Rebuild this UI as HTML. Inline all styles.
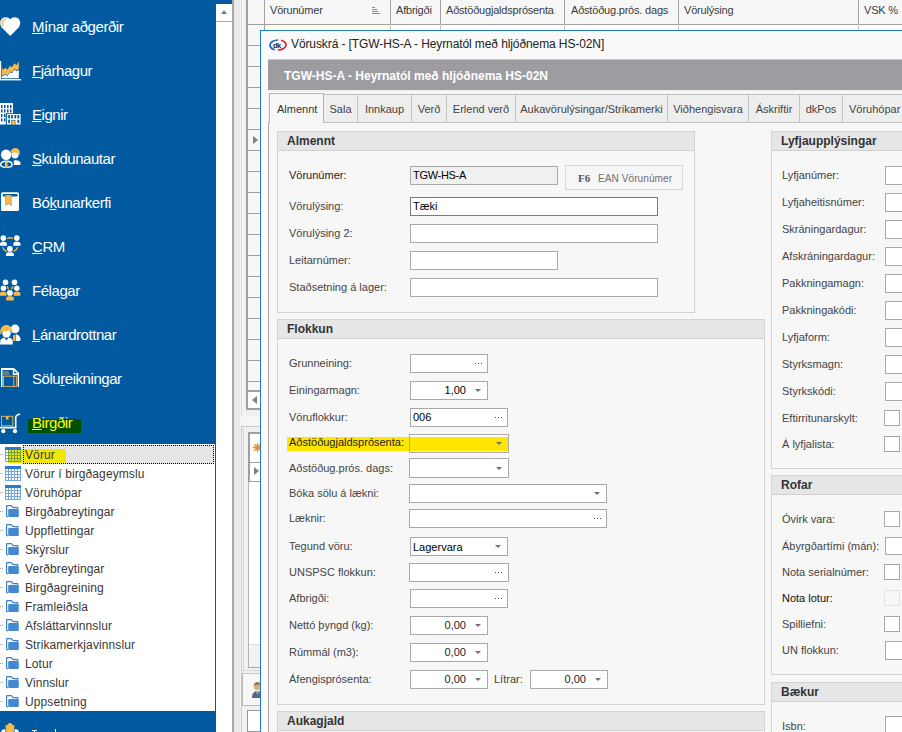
<!DOCTYPE html>
<html><head><meta charset="utf-8"><style>
html,body{margin:0;padding:0;}
body{width:902px;height:732px;overflow:hidden;position:relative;background:#f0f0f0;font-family:"Liberation Sans",sans-serif;}
body>div{position:absolute;}
.t{white-space:pre;line-height:1;}
.nav u{text-decoration:underline;text-underline-offset:1px;text-decoration-thickness:1px;}
svg{display:block;}
</style></head><body>
<div style="left:0px;top:0px;width:232px;height:732px;background:#015aa0"></div>
<div style="left:0;top:16px"><svg width="21" height="21" viewBox="0 0 21 21"><path d="M10.2 20 L2 11.8 C-0.6 9.1 -0.4 4.1 2.7 2.1 C5.3 0.5 8.5 1.1 10.2 3.3 C11.9 1.1 15.1 0.5 17.7 2.1 C20.8 4.1 21 9.1 18.4 11.8 Z" fill="#fff"/><path d="M6.1 3 C3.6 3.4 2.1 5.5 2.4 8.2 L3 10.4" stroke="#fbb948" stroke-width="1.5" fill="none"/></svg></div>
<div class="t nav" style="left:32px;top:19px;font-size:15px;color:#fff;letter-spacing:-0.45px"><u>M</u>ínar aðgerðir</div>
<div style="left:0;top:58px"><svg width="22" height="24" viewBox="0 0 22 24"><rect x="0" y="3" width="1.2" height="19" fill="#fff"/><rect x="0" y="21" width="21" height="1.4" fill="#fff"/><path d="M2 9.8 L3.3 11.8 L5.2 9.8 L7.5 11.8 L9.8 7.9 L12.1 9.2 L14.4 5.2 L16.4 7.2 L18.8 3.6 L18.8 11.1 L16.4 12.1 L14.4 10.8 L12.1 14.4 L9.8 13.4 L7.5 17.4 L5.2 15.4 L3.3 17.4 L2 16.7 Z" fill="#fbb948"/><path d="M2 17.4 L3.3 18.2 L5.2 16.2 L7.5 18.2 L9.8 14.2 L12.1 15.2 L14.4 11.6 L16.4 12.9 L18.8 11.9 L18.8 20.2 L2 20.2 Z" fill="#fff"/></svg></div>
<div class="t nav" style="left:32px;top:63px;font-size:15px;color:#fff;letter-spacing:-0.45px"><u>F</u>járhagur</div>
<div style="left:0;top:100px"><svg width="22" height="26" viewBox="0 0 22 26"><rect x="0" y="3" width="13" height="21.5" fill="#fff"/><g fill="#015aa0"><rect x="1" y="5" width="1.5" height="3.2"/><rect x="4" y="5" width="1.5" height="3.2"/><rect x="7" y="5" width="1.5" height="3.2"/><rect x="10" y="5" width="1.5" height="3.2"/><rect x="1" y="9.3" width="1.5" height="3.2"/><rect x="4" y="9.3" width="1.5" height="3.2"/><rect x="7" y="9.3" width="1.5" height="3.2"/><rect x="10" y="9.3" width="1.5" height="3.2"/><rect x="1" y="14" width="1.5" height="3"/><rect x="4" y="14" width="1.5" height="3"/><rect x="1" y="18.4" width="1.5" height="3"/><rect x="4" y="18.4" width="1.5" height="3"/><rect x="5.8" y="13.2" width="15.6" height="12.3"/></g><rect x="6.8" y="14" width="13.8" height="10.5" fill="#fff"/><g fill="#015aa0"><rect x="8.2" y="15" width="1.8" height="3.4"/><rect x="11.1" y="15" width="1.8" height="3.4"/><rect x="14.4" y="15" width="1.8" height="3.4"/><rect x="17.4" y="15" width="1.8" height="3.4"/><rect x="8.2" y="19.7" width="1.8" height="3.3"/><rect x="17.4" y="19.7" width="1.8" height="3.3"/><rect x="11.4" y="19.9" width="4" height="4.6"/></g><rect x="12" y="20.5" width="2.9" height="4" fill="#fbb948"/></svg></div>
<div class="t nav" style="left:32px;top:107px;font-size:15px;color:#fff;letter-spacing:-0.45px"><u>E</u>ignir</div>
<div style="left:0;top:145px"><svg width="21" height="24" viewBox="0 0 21 24"><circle cx="15" cy="9.8" r="3.6" fill="#fff"/><path d="M10.6 7.6 C10.8 4.6 12.8 3 15.2 3 C18 3 20 5.2 19.9 8 L19.3 10.4 C18.2 8 16.5 7.3 14.5 7.7 C13 8 11.8 8 10.6 7.6 Z" fill="#fbb948"/><path d="M13.8 15.6 C15.8 14.7 19.2 15 20.4 17.4 C20.9 18.6 20.5 20 19 20.1 L13.8 20.1 Z" fill="#fff"/><circle cx="6.1" cy="9.8" r="5.2" fill="#fff"/><path d="M6.4 16.3 C10 16.3 12.1 17.8 12.1 19.8 C12.1 21.8 10 22.4 6.4 22.4 C2.8 22.4 0.7 21.8 0.7 19.8 C0.7 17.8 2.8 16.3 6.4 16.3 Z" stroke="#fff" stroke-width="1.4" fill="none"/><path d="M5.1 16.4 L7.5 16.4 L7.7 23 L4.9 23 Z" fill="#fbb948"/></svg></div>
<div class="t nav" style="left:32px;top:151px;font-size:15px;color:#fff;letter-spacing:-0.45px"><u>S</u>kuldunautar</div>
<div style="left:0;top:189px"><svg width="21" height="22" viewBox="0 0 21 22"><rect x="1" y="3.2" width="18" height="19" rx="1.6" fill="#fff"/><rect x="2.6" y="5" width="15" height="2.6" rx="1" fill="#015aa0"/><path d="M4 6 L11.3 6 L11.3 16.5 L8.5 14.8 L5.6 16.5 L5.6 7.3 Z" fill="#fbb948" stroke="#3a6a8a" stroke-width="0.4"/></svg></div>
<div class="t nav" style="left:32px;top:195px;font-size:15px;color:#fff;letter-spacing:-0.45px">Bó<u>k</u>unarkerfi</div>
<div style="left:0;top:233px"><svg width="21" height="24" viewBox="0 0 21 24"><circle cx="3.3" cy="5.1" r="2.8" fill="#fff"/><path d="M0 12.8 L0 11 C0 9.3 1.5 8.8 3.4 8.8 C5.4 8.8 6.9 9.3 6.9 11 L6.9 12.8 Z" fill="#fff"/><circle cx="16.8" cy="5.1" r="2.8" fill="#fff"/><path d="M13.3 12.8 L13.3 11 C13.3 9.3 14.8 8.8 16.9 8.8 C18.9 8.8 20.5 9.3 20.5 11 L20.5 12.8 Z" fill="#fff"/><circle cx="9.9" cy="15.9" r="2.85" fill="#fff"/><path d="M6 23 L6 21.3 C6 19.8 7.6 19.3 9.9 19.3 C12.2 19.3 13.8 19.8 13.8 21.3 L13.8 23 Z" fill="#fff"/><path d="M7.1 5.6 C9 4.5 11 4.5 12.9 5.6" stroke="#fbb948" stroke-width="1.3" fill="none"/><path d="M2.6 14.2 C3.3 16.3 4.8 17.8 6.6 18.6" stroke="#fbb948" stroke-width="1.3" fill="none"/><path d="M17.6 14.2 C16.9 16.3 15.4 17.8 13.6 18.6" stroke="#fbb948" stroke-width="1.3" fill="none"/></svg></div>
<div class="t nav" style="left:32px;top:239px;font-size:15px;color:#fff;letter-spacing:-0.45px"><u>C</u>RM</div>
<div style="left:0;top:278px"><svg width="21" height="23" viewBox="0 0 21 23"><circle cx="5.5" cy="4.3" r="2.8" fill="#fff"/><circle cx="14.5" cy="4.3" r="2.8" fill="#fff"/><path d="M6.5 7.9 C8.6 8.2 9.1 10 8.7 11.4 L7.4 11 Z" fill="#fbb948"/><path d="M13.5 7.9 C11.4 8.2 10.9 10 11.3 11.4 L12.6 11 Z" fill="#fbb948"/><circle cx="3.4" cy="10.3" r="2.75" fill="#fff"/><circle cx="16.8" cy="10.3" r="2.75" fill="#fff"/><path d="M0 17.7 L0 15 C0 14.2 1.2 13.7 3.3 13.7 C5.4 13.7 6.6 14.2 6.6 15.2 L6.4 17.7 Z" fill="#fbb948"/><path d="M13.8 17.7 L13.6 15.2 C13.6 14.2 14.8 13.7 17 13.7 C19.2 13.7 20.3 14.2 20.3 15.2 L20.3 17.7 Z" fill="#fbb948"/><circle cx="9.9" cy="14.9" r="2.85" fill="#fff"/><path d="M6.2 22.5 L6.2 19.8 C6.2 18.8 7.6 18.3 10 18.3 C12.4 18.3 13.8 18.8 13.8 19.8 L13.8 22.5 Z" fill="#fbb948"/></svg></div>
<div class="t nav" style="left:32px;top:283px;font-size:15px;color:#fff;letter-spacing:-0.45px">Féla<u>g</u>ar</div>
<div style="left:0;top:322px"><svg width="21" height="23" viewBox="0 0 21 23"><circle cx="15.1" cy="6.9" r="4.3" fill="#fff"/><path d="M15.7 12.1 C18.3 12.6 20.4 14.6 20.6 17.6 C20.6 18.6 20 19 19 19 L15.7 19 Z" fill="#fff"/><path d="M13.1 13 L15.1 13 L15.1 19 L13.1 19 Z" fill="#fbb948"/><circle cx="6.5" cy="11.5" r="4.2" fill="#fff"/><path d="M0 11.8 C-0.2 6.5 2.5 3 6.2 3 C9.8 3 12.2 5.6 12.2 9.2 L11.8 11.8 C11 9.5 9.5 8.6 8.3 8.2 C6.5 9.2 4 9.6 2.3 9.6 C1.6 10.2 1.3 11 1.2 12.2 Z" fill="#fbb948"/><path d="M0 22.5 L0.4 18.6 C0.9 16.8 2.6 15.8 4.5 15.8 L8.5 15.8 C10.4 15.8 12.2 16.8 12.6 18.6 L12.8 22.5 Z" fill="#fff"/><path d="M4.6 15.8 L6.5 18.4 L8.4 15.8 Z" fill="#015aa0"/></svg></div>
<div class="t nav" style="left:32px;top:327px;font-size:15px;color:#fff;letter-spacing:-0.45px"><u>L</u>ánardrottnar</div>
<div style="left:0;top:365px"><svg width="21" height="22" viewBox="0 0 21 22"><path d="M1 3 L14 3 L19 8 L19 23 L1 23 Z" fill="#fff"/><rect x="2.5" y="5" width="10.3" height="5.2" fill="#015aa0"/><path d="M14.3 5.5 L17 8.4 L14.3 8.4 Z" fill="#015aa0"/><rect x="2.5" y="10" width="15.2" height="12" fill="#015aa0"/><rect x="3.5" y="11.2" width="13.2" height="10.2" fill="none" stroke="#e8b659" stroke-width="0.9"/><rect x="13.4" y="11.2" width="0.9" height="10.2" fill="#e8b659"/><rect x="3.2" y="6.6" width="5.5" height="0.9" fill="#e8b659"/><rect x="3.2" y="8.6" width="6.5" height="0.9" fill="#c9a96a"/></svg></div>
<div class="t nav" style="left:32px;top:371px;font-size:15px;color:#fff;letter-spacing:-0.45px">Sölu<u>r</u>eikningar</div>
<div style="left:0;top:410px"><svg width="22" height="25" viewBox="0 0 22 25"><rect x="1.5" y="6.3" width="11.3" height="9.5" fill="none" stroke="#e8b659" stroke-width="0.9"/><rect x="6" y="6.3" width="2.5" height="3.2" fill="#fbb948"/><path d="M0 17.6 L15.7 17.6 L15.7 7.2 C15.7 6.2 17 5 20 4" stroke="#fff" stroke-width="1.6" fill="none"/><circle cx="3.3" cy="21.2" r="2.1" fill="#fff"/><circle cx="15" cy="21.2" r="2.1" fill="#fff"/></svg></div>
<div style="left:28px;top:419px;width:53px;height:14px;background:#004f00"></div>
<div class="t nav" style="left:32px;top:415px;font-size:15px;color:#ffff00;letter-spacing:-0.45px"><u>B</u>irgðir</div>
<div style="left:0px;top:444px;width:215px;height:267px;background:#fff"></div>
<div style="left:23px;top:445px;width:191px;height:19px;background:#e6e6e6"></div>
<div style="left:8px;top:449px;width:58px;height:14px;background:#f0e800"></div>
<div style="left:23px;top:445px;width:191px;height:19px;border:1px dotted #000;box-sizing:border-box"></div>
<div style="left:0;top:454px;width:1px;height:1px;background:#a8a8a8"></div>
<div style="left:2px;top:454px;width:1px;height:1px;background:#a8a8a8"></div>
<div style="left:5px;top:447px"><svg width="16" height="15" viewBox="0 0 16 15"><rect x="0" y="0" width="16" height="15" rx="0.8" fill="#72a5da"/><rect x="3" y="3" width="13" height="12" fill="#6f9c3c"/><rect x="0" y="0" width="16" height="3" fill="#3079c4"/><rect x="1" y="3" width="2" height="2" fill="#fff"/><rect x="1" y="6" width="2" height="2" fill="#fff"/><rect x="1" y="9" width="2" height="2" fill="#fff"/><rect x="1" y="12" width="2" height="2" fill="#fff"/><rect x="4" y="3" width="2" height="2" fill="#f2e600"/><rect x="4" y="6" width="2" height="2" fill="#f2e600"/><rect x="4" y="9" width="2" height="2" fill="#f2e600"/><rect x="4" y="12" width="2" height="2" fill="#f2e600"/><rect x="7" y="3" width="2" height="2" fill="#f2e600"/><rect x="7" y="6" width="2" height="2" fill="#f2e600"/><rect x="7" y="9" width="2" height="2" fill="#f2e600"/><rect x="7" y="12" width="2" height="2" fill="#f2e600"/><rect x="10" y="3" width="2" height="2" fill="#f2e600"/><rect x="10" y="6" width="2" height="2" fill="#f2e600"/><rect x="10" y="9" width="2" height="2" fill="#f2e600"/><rect x="10" y="12" width="2" height="2" fill="#f2e600"/><rect x="13" y="3" width="2" height="2" fill="#f2e600"/><rect x="13" y="6" width="2" height="2" fill="#f2e600"/><rect x="13" y="9" width="2" height="2" fill="#f2e600"/><rect x="13" y="12" width="2" height="2" fill="#f2e600"/></svg></div>
<div class="t " style="left:25px;top:449px;font-size:12px;color:#383838;letter-spacing:0.1px">Vörur</div>
<div style="left:0;top:473px;width:1px;height:1px;background:#a8a8a8"></div>
<div style="left:2px;top:473px;width:1px;height:1px;background:#a8a8a8"></div>
<div style="left:5px;top:466px"><svg width="16" height="15" viewBox="0 0 16 15"><rect x="0" y="0" width="16" height="15" rx="0.8" fill="#72a5da"/><rect x="0" y="0" width="16" height="3" fill="#3079c4"/><rect x="1" y="3" width="2" height="2" fill="#fff"/><rect x="1" y="6" width="2" height="2" fill="#fff"/><rect x="1" y="9" width="2" height="2" fill="#fff"/><rect x="1" y="12" width="2" height="2" fill="#fff"/><rect x="4" y="3" width="2" height="2" fill="#fff"/><rect x="4" y="6" width="2" height="2" fill="#fff"/><rect x="4" y="9" width="2" height="2" fill="#fff"/><rect x="4" y="12" width="2" height="2" fill="#fff"/><rect x="7" y="3" width="2" height="2" fill="#fff"/><rect x="7" y="6" width="2" height="2" fill="#fff"/><rect x="7" y="9" width="2" height="2" fill="#fff"/><rect x="7" y="12" width="2" height="2" fill="#fff"/><rect x="10" y="3" width="2" height="2" fill="#fff"/><rect x="10" y="6" width="2" height="2" fill="#fff"/><rect x="10" y="9" width="2" height="2" fill="#fff"/><rect x="10" y="12" width="2" height="2" fill="#fff"/><rect x="13" y="3" width="2" height="2" fill="#fff"/><rect x="13" y="6" width="2" height="2" fill="#fff"/><rect x="13" y="9" width="2" height="2" fill="#fff"/><rect x="13" y="12" width="2" height="2" fill="#fff"/></svg></div>
<div class="t " style="left:25px;top:468px;font-size:12px;color:#383838;letter-spacing:0.1px">Vörur í birgðageymslu</div>
<div style="left:0;top:492px;width:1px;height:1px;background:#a8a8a8"></div>
<div style="left:2px;top:492px;width:1px;height:1px;background:#a8a8a8"></div>
<div style="left:5px;top:485px"><svg width="16" height="15" viewBox="0 0 16 15"><rect x="0" y="0" width="16" height="15" rx="0.8" fill="#72a5da"/><rect x="0" y="0" width="16" height="3" fill="#3079c4"/><rect x="1" y="3" width="2" height="2" fill="#fff"/><rect x="1" y="6" width="2" height="2" fill="#fff"/><rect x="1" y="9" width="2" height="2" fill="#fff"/><rect x="1" y="12" width="2" height="2" fill="#fff"/><rect x="4" y="3" width="2" height="2" fill="#fff"/><rect x="4" y="6" width="2" height="2" fill="#fff"/><rect x="4" y="9" width="2" height="2" fill="#fff"/><rect x="4" y="12" width="2" height="2" fill="#fff"/><rect x="7" y="3" width="2" height="2" fill="#fff"/><rect x="7" y="6" width="2" height="2" fill="#fff"/><rect x="7" y="9" width="2" height="2" fill="#fff"/><rect x="7" y="12" width="2" height="2" fill="#fff"/><rect x="10" y="3" width="2" height="2" fill="#fff"/><rect x="10" y="6" width="2" height="2" fill="#fff"/><rect x="10" y="9" width="2" height="2" fill="#fff"/><rect x="10" y="12" width="2" height="2" fill="#fff"/><rect x="13" y="3" width="2" height="2" fill="#fff"/><rect x="13" y="6" width="2" height="2" fill="#fff"/><rect x="13" y="9" width="2" height="2" fill="#fff"/><rect x="13" y="12" width="2" height="2" fill="#fff"/></svg></div>
<div class="t " style="left:25px;top:487px;font-size:12px;color:#383838;letter-spacing:0.1px">Vöruhópar</div>
<div style="left:0;top:511px;width:1px;height:1px;background:#a8a8a8"></div>
<div style="left:2px;top:511px;width:1px;height:1px;background:#a8a8a8"></div>
<div style="left:6px;top:505px"><svg width="14" height="13" viewBox="0 0 14 13"><path d="M0.6 11.6 L0.6 1.2 Q0.6 0.6 1.2 0.6 L5.2 0.6 L7.2 2.6 L11.7 2.6 L11.7 4.2" stroke="#3a7fc8" stroke-width="1.2" fill="none"/><path d="M0.6 11.2 Q0.8 11.9 2 11.9" stroke="#3a7fc8" stroke-width="1.2" fill="none"/><rect x="2.2" y="4" width="10.6" height="7.9" rx="0.9" fill="#4389d0"/></svg></div>
<div class="t " style="left:25px;top:506px;font-size:12px;color:#383838;letter-spacing:0.1px">Birgðabreytingar</div>
<div style="left:0;top:530px;width:1px;height:1px;background:#a8a8a8"></div>
<div style="left:2px;top:530px;width:1px;height:1px;background:#a8a8a8"></div>
<div style="left:6px;top:524px"><svg width="14" height="13" viewBox="0 0 14 13"><path d="M0.6 11.6 L0.6 1.2 Q0.6 0.6 1.2 0.6 L5.2 0.6 L7.2 2.6 L11.7 2.6 L11.7 4.2" stroke="#3a7fc8" stroke-width="1.2" fill="none"/><path d="M0.6 11.2 Q0.8 11.9 2 11.9" stroke="#3a7fc8" stroke-width="1.2" fill="none"/><rect x="2.2" y="4" width="10.6" height="7.9" rx="0.9" fill="#4389d0"/></svg></div>
<div class="t " style="left:25px;top:525px;font-size:12px;color:#383838;letter-spacing:0.1px">Uppflettingar</div>
<div style="left:0;top:549px;width:1px;height:1px;background:#a8a8a8"></div>
<div style="left:2px;top:549px;width:1px;height:1px;background:#a8a8a8"></div>
<div style="left:6px;top:543px"><svg width="14" height="13" viewBox="0 0 14 13"><path d="M0.6 11.6 L0.6 1.2 Q0.6 0.6 1.2 0.6 L5.2 0.6 L7.2 2.6 L11.7 2.6 L11.7 4.2" stroke="#3a7fc8" stroke-width="1.2" fill="none"/><path d="M0.6 11.2 Q0.8 11.9 2 11.9" stroke="#3a7fc8" stroke-width="1.2" fill="none"/><rect x="2.2" y="4" width="10.6" height="7.9" rx="0.9" fill="#4389d0"/></svg></div>
<div class="t " style="left:25px;top:544px;font-size:12px;color:#383838;letter-spacing:0.1px">Skýrslur</div>
<div style="left:0;top:568px;width:1px;height:1px;background:#a8a8a8"></div>
<div style="left:2px;top:568px;width:1px;height:1px;background:#a8a8a8"></div>
<div style="left:6px;top:562px"><svg width="14" height="13" viewBox="0 0 14 13"><path d="M0.6 11.6 L0.6 1.2 Q0.6 0.6 1.2 0.6 L5.2 0.6 L7.2 2.6 L11.7 2.6 L11.7 4.2" stroke="#3a7fc8" stroke-width="1.2" fill="none"/><path d="M0.6 11.2 Q0.8 11.9 2 11.9" stroke="#3a7fc8" stroke-width="1.2" fill="none"/><rect x="2.2" y="4" width="10.6" height="7.9" rx="0.9" fill="#4389d0"/></svg></div>
<div class="t " style="left:25px;top:563px;font-size:12px;color:#383838;letter-spacing:0.1px">Verðbreytingar</div>
<div style="left:0;top:587px;width:1px;height:1px;background:#a8a8a8"></div>
<div style="left:2px;top:587px;width:1px;height:1px;background:#a8a8a8"></div>
<div style="left:6px;top:581px"><svg width="14" height="13" viewBox="0 0 14 13"><path d="M0.6 11.6 L0.6 1.2 Q0.6 0.6 1.2 0.6 L5.2 0.6 L7.2 2.6 L11.7 2.6 L11.7 4.2" stroke="#3a7fc8" stroke-width="1.2" fill="none"/><path d="M0.6 11.2 Q0.8 11.9 2 11.9" stroke="#3a7fc8" stroke-width="1.2" fill="none"/><rect x="2.2" y="4" width="10.6" height="7.9" rx="0.9" fill="#4389d0"/></svg></div>
<div class="t " style="left:25px;top:582px;font-size:12px;color:#383838;letter-spacing:0.1px">Birgðagreining</div>
<div style="left:0;top:606px;width:1px;height:1px;background:#a8a8a8"></div>
<div style="left:2px;top:606px;width:1px;height:1px;background:#a8a8a8"></div>
<div style="left:6px;top:600px"><svg width="14" height="13" viewBox="0 0 14 13"><path d="M0.6 11.6 L0.6 1.2 Q0.6 0.6 1.2 0.6 L5.2 0.6 L7.2 2.6 L11.7 2.6 L11.7 4.2" stroke="#3a7fc8" stroke-width="1.2" fill="none"/><path d="M0.6 11.2 Q0.8 11.9 2 11.9" stroke="#3a7fc8" stroke-width="1.2" fill="none"/><rect x="2.2" y="4" width="10.6" height="7.9" rx="0.9" fill="#4389d0"/></svg></div>
<div class="t " style="left:25px;top:601px;font-size:12px;color:#383838;letter-spacing:0.1px">Framleiðsla</div>
<div style="left:0;top:625px;width:1px;height:1px;background:#a8a8a8"></div>
<div style="left:2px;top:625px;width:1px;height:1px;background:#a8a8a8"></div>
<div style="left:6px;top:619px"><svg width="14" height="13" viewBox="0 0 14 13"><path d="M0.6 11.6 L0.6 1.2 Q0.6 0.6 1.2 0.6 L5.2 0.6 L7.2 2.6 L11.7 2.6 L11.7 4.2" stroke="#3a7fc8" stroke-width="1.2" fill="none"/><path d="M0.6 11.2 Q0.8 11.9 2 11.9" stroke="#3a7fc8" stroke-width="1.2" fill="none"/><rect x="2.2" y="4" width="10.6" height="7.9" rx="0.9" fill="#4389d0"/></svg></div>
<div class="t " style="left:25px;top:620px;font-size:12px;color:#383838;letter-spacing:0.1px">Afsláttarvinnslur</div>
<div style="left:0;top:644px;width:1px;height:1px;background:#a8a8a8"></div>
<div style="left:2px;top:644px;width:1px;height:1px;background:#a8a8a8"></div>
<div style="left:6px;top:638px"><svg width="14" height="13" viewBox="0 0 14 13"><path d="M0.6 11.6 L0.6 1.2 Q0.6 0.6 1.2 0.6 L5.2 0.6 L7.2 2.6 L11.7 2.6 L11.7 4.2" stroke="#3a7fc8" stroke-width="1.2" fill="none"/><path d="M0.6 11.2 Q0.8 11.9 2 11.9" stroke="#3a7fc8" stroke-width="1.2" fill="none"/><rect x="2.2" y="4" width="10.6" height="7.9" rx="0.9" fill="#4389d0"/></svg></div>
<div class="t " style="left:25px;top:639px;font-size:12px;color:#383838;letter-spacing:0.1px">Strikamerkjavinnslur</div>
<div style="left:0;top:663px;width:1px;height:1px;background:#a8a8a8"></div>
<div style="left:2px;top:663px;width:1px;height:1px;background:#a8a8a8"></div>
<div style="left:6px;top:657px"><svg width="14" height="13" viewBox="0 0 14 13"><path d="M0.6 11.6 L0.6 1.2 Q0.6 0.6 1.2 0.6 L5.2 0.6 L7.2 2.6 L11.7 2.6 L11.7 4.2" stroke="#3a7fc8" stroke-width="1.2" fill="none"/><path d="M0.6 11.2 Q0.8 11.9 2 11.9" stroke="#3a7fc8" stroke-width="1.2" fill="none"/><rect x="2.2" y="4" width="10.6" height="7.9" rx="0.9" fill="#4389d0"/></svg></div>
<div class="t " style="left:25px;top:658px;font-size:12px;color:#383838;letter-spacing:0.1px">Lotur</div>
<div style="left:0;top:682px;width:1px;height:1px;background:#a8a8a8"></div>
<div style="left:2px;top:682px;width:1px;height:1px;background:#a8a8a8"></div>
<div style="left:6px;top:676px"><svg width="14" height="13" viewBox="0 0 14 13"><path d="M0.6 11.6 L0.6 1.2 Q0.6 0.6 1.2 0.6 L5.2 0.6 L7.2 2.6 L11.7 2.6 L11.7 4.2" stroke="#3a7fc8" stroke-width="1.2" fill="none"/><path d="M0.6 11.2 Q0.8 11.9 2 11.9" stroke="#3a7fc8" stroke-width="1.2" fill="none"/><rect x="2.2" y="4" width="10.6" height="7.9" rx="0.9" fill="#4389d0"/></svg></div>
<div class="t " style="left:25px;top:677px;font-size:12px;color:#383838;letter-spacing:0.1px">Vinnslur</div>
<div style="left:0;top:701px;width:1px;height:1px;background:#a8a8a8"></div>
<div style="left:2px;top:701px;width:1px;height:1px;background:#a8a8a8"></div>
<div style="left:6px;top:695px"><svg width="14" height="13" viewBox="0 0 14 13"><path d="M0.6 11.6 L0.6 1.2 Q0.6 0.6 1.2 0.6 L5.2 0.6 L7.2 2.6 L11.7 2.6 L11.7 4.2" stroke="#3a7fc8" stroke-width="1.2" fill="none"/><path d="M0.6 11.2 Q0.8 11.9 2 11.9" stroke="#3a7fc8" stroke-width="1.2" fill="none"/><rect x="2.2" y="4" width="10.6" height="7.9" rx="0.9" fill="#4389d0"/></svg></div>
<div class="t " style="left:25px;top:696px;font-size:12px;color:#383838;letter-spacing:0.1px">Uppsetning</div>
<div style="left:0;top:723px"><svg width="20" height="9" viewBox="0 0 20 9"><path d="M5.6 4 C5.2 2.2 6.2 1.5 7.2 2.3 L8.3 0.6 L10 0 L11.7 0.6 L12.8 2.3 C13.8 1.5 14.8 2.2 14.4 4 L13.6 9 L6.4 9 Z" fill="#fbb948"/><path d="M1 9 C1.5 7 3 6 5.2 6 L5.6 9 Z" fill="#fff"/><path d="M14.4 9 L14.8 6 C17 6 18.5 7 19 9 Z" fill="#fff"/></svg></div>
<div style="left:32px;top:730px;width:5px;height:1px;background:#fff"></div>
<div style="left:34px;top:730px;width:1px;height:2px;background:#fff"></div>
<div style="left:55px;top:729px;width:1px;height:3px;background:#fff"></div>
<div style="left:216px;top:4px;width:16px;height:728px;background:#fff"></div>
<div style="left:216px;top:21px;width:16px;height:1px;background:#a8a8a8"></div>
<div style="left:221px;top:10px;width:0;height:0;border-left:3px solid transparent;border-right:3px solid transparent;border-bottom:4px solid #808080"></div>
<div style="left:232px;top:0px;width:2px;height:732px;background:#a9a9a9"></div>
<div style="left:234px;top:0px;width:6px;height:732px;background:#e9e9e9"></div>
<div style="left:240px;top:0px;width:6px;height:732px;background:#f3f3f3"></div>
<div style="left:241px;top:0px;width:1px;height:416px;background:#e2e2e2"></div>
<div style="left:246px;top:0px;width:656px;height:409px;background:#fff"></div>
<div style="left:246px;top:0px;width:656px;height:24px;background:#f7f7f7"></div>
<div style="left:248px;top:0px;width:16px;height:409px;background:#f7f7f7"></div>
<div style="left:246px;top:0px;width:2px;height:409px;background:#a0a0a0"></div>
<div style="left:248px;top:24px;width:654px;height:1px;background:#a0a0a0"></div>
<div style="left:248px;top:45px;width:654px;height:1px;background:#a0a0a0"></div>
<div style="left:248px;top:66px;width:654px;height:1px;background:#a0a0a0"></div>
<div style="left:248px;top:87px;width:654px;height:1px;background:#a0a0a0"></div>
<div style="left:248px;top:108px;width:654px;height:1px;background:#a0a0a0"></div>
<div style="left:248px;top:129px;width:654px;height:1px;background:#a0a0a0"></div>
<div style="left:248px;top:150px;width:654px;height:1px;background:#a0a0a0"></div>
<div style="left:248px;top:171px;width:654px;height:1px;background:#a0a0a0"></div>
<div style="left:248px;top:192px;width:654px;height:1px;background:#a0a0a0"></div>
<div style="left:248px;top:213px;width:654px;height:1px;background:#a0a0a0"></div>
<div style="left:248px;top:234px;width:654px;height:1px;background:#a0a0a0"></div>
<div style="left:248px;top:255px;width:654px;height:1px;background:#a0a0a0"></div>
<div style="left:248px;top:276px;width:654px;height:1px;background:#a0a0a0"></div>
<div style="left:248px;top:297px;width:654px;height:1px;background:#a0a0a0"></div>
<div style="left:248px;top:318px;width:654px;height:1px;background:#a0a0a0"></div>
<div style="left:248px;top:339px;width:654px;height:1px;background:#a0a0a0"></div>
<div style="left:248px;top:360px;width:654px;height:1px;background:#a0a0a0"></div>
<div style="left:248px;top:381px;width:654px;height:1px;background:#a0a0a0"></div>
<div style="left:264px;top:0px;width:1px;height:24px;background:#a0a0a0"></div>
<div style="left:264px;top:24px;width:1px;height:6px;background:#c4c4c4"></div>
<div style="left:390px;top:0px;width:1px;height:24px;background:#a0a0a0"></div>
<div style="left:390px;top:24px;width:1px;height:6px;background:#c4c4c4"></div>
<div style="left:440px;top:0px;width:1px;height:24px;background:#a0a0a0"></div>
<div style="left:440px;top:24px;width:1px;height:6px;background:#c4c4c4"></div>
<div style="left:564px;top:0px;width:1px;height:24px;background:#a0a0a0"></div>
<div style="left:564px;top:24px;width:1px;height:6px;background:#c4c4c4"></div>
<div style="left:678px;top:0px;width:1px;height:24px;background:#a0a0a0"></div>
<div style="left:678px;top:24px;width:1px;height:6px;background:#c4c4c4"></div>
<div style="left:858px;top:0px;width:1px;height:24px;background:#a0a0a0"></div>
<div style="left:858px;top:24px;width:1px;height:6px;background:#c4c4c4"></div>
<div style="left:264px;top:0px;width:1px;height:409px;background:#a0a0a0"></div>
<div style="left:265px;top:25px;width:125px;height:5px;background:#fdfde3"></div>
<div class="t " style="left:270px;top:5px;font-size:11px;color:#3a3a3a;letter-spacing:-0.2px">Vörunúmer</div>
<div class="t " style="left:396px;top:5px;font-size:11px;color:#3a3a3a;letter-spacing:-0.2px">Afbrigði</div>
<div class="t " style="left:446px;top:5px;font-size:11px;color:#3a3a3a;letter-spacing:-0.2px">Aðstöðugjaldsprósenta</div>
<div class="t " style="left:571px;top:5px;font-size:11px;color:#3a3a3a;letter-spacing:-0.2px">Aðstöðug.prós. dags</div>
<div class="t " style="left:684px;top:5px;font-size:11px;color:#3a3a3a;letter-spacing:-0.2px">Vörulýsing</div>
<div class="t " style="left:864px;top:5px;font-size:11px;color:#3a3a3a;letter-spacing:-0.2px">VSK %</div>
<div style="left:372px;top:7px"><svg width="8" height="7" viewBox="0 0 8 7"><g fill="#8a8a8a"><rect x="0" y="0" width="3" height="1"/><rect x="0" y="2" width="5" height="1"/><rect x="0" y="4" width="6" height="1"/><rect x="0" y="6" width="8" height="1"/></g></svg></div>
<div style="left:253px;top:136px;width:0;height:0;border-top:4px solid transparent;border-bottom:4px solid transparent;border-left:5px solid #808080"></div>
<div style="left:248px;top:381px;width:12px;height:1px;background:#a0a0a0"></div>
<div style="left:248px;top:390px;width:12px;height:19px;background:#fff;border-top:2px solid #a0a0a0;box-sizing:border-box"></div>
<div style="left:252px;top:396px;width:0;height:0;border-top:4px solid transparent;border-bottom:4px solid transparent;border-right:5px solid #808080"></div>
<div style="left:246px;top:408px;width:16px;height:2px;background:#a0a0a0"></div>
<div style="left:241px;top:416px;width:19px;height:11px;background:#f6f6f6"></div>
<div style="left:241px;top:426px;width:1px;height:306px;background:#c8c8c8"></div>
<div style="left:242px;top:426px;width:18px;height:1px;background:#c8c8c8"></div>
<div style="left:243px;top:428px;width:1px;height:246px;background:#d8d8d8"></div>
<div style="left:248px;top:432px;width:12px;height:236px;background:#fff;border-left:1px solid #b4b4b4;border-bottom:1px solid #b4b4b4;box-sizing:border-box"></div>
<div style="left:248px;top:432px;width:12px;height:50px;border-left:2px solid #a0a0a0;border-top:2px solid #a0a0a0;box-sizing:border-box"></div>
<div style="left:250px;top:462px;width:10px;height:1px;background:#a0a0a0"></div>
<div style="left:250px;top:481px;width:10px;height:1px;background:#a0a0a0"></div>
<div style="left:253px;top:443px"><svg width="9" height="9" viewBox="0 0 9 9"><g stroke="#f7901e" stroke-width="1.3"><path d="M4.5 0V9M0 4.5H9M1.3 1.3L7.7 7.7M7.7 1.3L1.3 7.7"/></g><circle cx="4.5" cy="4.5" r="2.3" fill="#f7901e"/></svg></div>
<div style="left:254px;top:467px;width:0;height:0;border-top:4px solid transparent;border-bottom:4px solid transparent;border-left:5px solid #808080"></div>
<div style="left:249px;top:644px;width:11px;height:24px;background:#f3f3f3;border-top:1px solid #dcdcdc;border-bottom:1px solid #a8a8a8;box-sizing:border-box"></div>
<div style="left:243px;top:670px;width:17px;height:1px;background:#d8d8d8"></div>
<div style="left:242px;top:673px;width:18px;height:1px;background:#c8c8c8"></div>
<div style="left:242px;top:674px;width:18px;height:32px;background:#f7f7f7;border-left:1px solid #b8b8b8;border-bottom:1px solid #b8b8b8;box-sizing:border-box"></div>
<div style="left:252px;top:682px"><svg width="9" height="17" viewBox="0 0 9 17"><circle cx="5.5" cy="4.5" r="3.8" fill="#d9b27a"/><path d="M1.8 3.5 C2 1 4 0 5.5 0 C7.5 0 9 1.2 9 3.5 L7.8 2.5 C6 3 4 3 1.8 3.5 Z" fill="#9a7a45"/><path d="M0 16 C0 10.5 2.5 9 5.5 9 C8.5 9 9 10.5 9 16 Z" fill="#56657a"/><path d="M4.3 9.2 L6.7 9.2 L5.5 15 Z" fill="#e8eef5"/><path d="M5.2 10 L5.8 10 L6 14 L5.5 15 L5 14 Z" fill="#2f7fd0"/></svg></div>
<div style="left:247px;top:710px;width:13px;height:22px;background:#fff;border:1px solid #999;border-right:none;box-sizing:border-box"></div>
<div style="left:260px;top:30px;width:642px;height:702px;background:#fafafa;border-left:1px solid #1f79d1;border-top:1px solid #1f79d1;box-sizing:border-box"></div>
<div style="left:269px;top:39px"><svg width="18" height="12" viewBox="0 0 18 12"><path d="M9.2 1 C4.8 1 1 3.2 1 6 C1 8.2 2.8 9.9 5.8 10.8" stroke="#1d5fbf" stroke-width="1.7" fill="none"/><path d="M8.8 11 C13.2 11 17 8.8 17 6 C17 3.8 15.2 2.1 12.2 1.2" stroke="#e01b2a" stroke-width="1.7" fill="none"/><text x="3.9" y="8.6" font-family="Liberation Sans" font-weight="bold" font-size="7.5" letter-spacing="-0.4" fill="#1a1a1a">dk</text></svg></div>
<div class="t " style="left:291px;top:38px;font-size:12px;color:#222;letter-spacing:-0.1px">Vöruskrá - [TGW-HS-A - Heyrnatól með hljóðnema HS-02N]</div>
<div style="left:268px;top:59px;width:634px;height:31px;background:#9d9ca1;border-top:1px solid #c8c8cc;box-sizing:border-box"></div>
<div class="t " style="left:284px;top:70px;font-size:12px;color:#fff;font-weight:bold;">TGW-HS-A - Heyrnatól með hljóðnema HS-02N</div>
<div style="left:268px;top:90px;width:634px;height:642px;background:#f0f0f0"></div>
<div style="left:268px;top:92px;width:634px;height:1px;background:#fbfbfb"></div>
<div style="left:268px;top:122px;width:634px;height:610px;background:#f7f7f7;border-left:1px solid #a8a8a8;border-top:1px solid #bdbdbd;box-sizing:border-box"></div>
<div style="left:323px;top:94px;width:35px;height:29px;background:#eeeeee;border:1px solid #c4c4c4;box-sizing:border-box"></div>
<div style="left:357px;top:94px;width:55px;height:29px;background:#eeeeee;border:1px solid #c4c4c4;box-sizing:border-box"></div>
<div style="left:411px;top:94px;width:36px;height:29px;background:#eeeeee;border:1px solid #c4c4c4;box-sizing:border-box"></div>
<div style="left:446px;top:94px;width:70px;height:29px;background:#eeeeee;border:1px solid #c4c4c4;box-sizing:border-box"></div>
<div style="left:515px;top:94px;width:153px;height:29px;background:#eeeeee;border:1px solid #c4c4c4;box-sizing:border-box"></div>
<div style="left:667px;top:94px;width:82px;height:29px;background:#eeeeee;border:1px solid #c4c4c4;box-sizing:border-box"></div>
<div style="left:748px;top:94px;width:52px;height:29px;background:#eeeeee;border:1px solid #c4c4c4;box-sizing:border-box"></div>
<div style="left:799px;top:94px;width:44px;height:29px;background:#eeeeee;border:1px solid #c4c4c4;box-sizing:border-box"></div>
<div style="left:842px;top:94px;width:79px;height:29px;background:#eeeeee;border:1px solid #c4c4c4;box-sizing:border-box"></div>
<div style="left:269px;top:93px;width:55px;height:30px;background:#f7f7f7;border:1px solid #b4b4b4;border-bottom:none;box-sizing:border-box"></div>
<div class="t " style="left:277px;top:104px;font-size:11px;color:#333;">Almennt</div>
<div class="t" style="left:323px;top:104px;width:35px;text-align:center;font-size:11px;color:#444">Sala</div>
<div class="t" style="left:357px;top:104px;width:55px;text-align:center;font-size:11px;color:#444">Innkaup</div>
<div class="t" style="left:411px;top:104px;width:36px;text-align:center;font-size:11px;color:#444">Verð</div>
<div class="t" style="left:446px;top:104px;width:70px;text-align:center;font-size:11px;color:#444">Erlend verð</div>
<div class="t" style="left:515px;top:104px;width:153px;text-align:center;font-size:11px;color:#444">Aukavörulýsingar/Strikamerki</div>
<div class="t" style="left:667px;top:104px;width:82px;text-align:center;font-size:11px;color:#444">Viðhengisvara</div>
<div class="t" style="left:748px;top:104px;width:52px;text-align:center;font-size:11px;color:#444">Áskriftir</div>
<div class="t" style="left:799px;top:104px;width:44px;text-align:center;font-size:11px;color:#444">dkPos</div>
<div class="t " style="left:849px;top:104px;font-size:11px;color:#444;">Vöruhópar</div>
<div style="left:277px;top:131px;width:418px;height:182px;background:#f7f7f7;border:1px solid #d2d2d2;box-sizing:border-box"></div>
<div style="left:278px;top:132px;width:416px;height:19px;background:#e6e6e6;border-bottom:1px solid #d2d2d2;box-sizing:border-box"></div>
<div class="t " style="left:287px;top:135px;font-size:12px;color:#333;font-weight:bold;">Almennt</div>
<div style="left:277px;top:319px;width:488px;height:386px;background:#f7f7f7;border:1px solid #d2d2d2;box-sizing:border-box"></div>
<div style="left:278px;top:320px;width:486px;height:19px;background:#e6e6e6;border-bottom:1px solid #d2d2d2;box-sizing:border-box"></div>
<div class="t " style="left:287px;top:323px;font-size:12px;color:#333;font-weight:bold;">Flokkun</div>
<div style="left:277px;top:711px;width:488px;height:40px;background:#f7f7f7;border:1px solid #d2d2d2;box-sizing:border-box"></div>
<div style="left:278px;top:712px;width:486px;height:19px;background:#e6e6e6;border-bottom:1px solid #d2d2d2;box-sizing:border-box"></div>
<div class="t " style="left:287px;top:715px;font-size:12px;color:#333;font-weight:bold;">Aukagjald</div>
<div style="left:771px;top:131px;width:160px;height:338px;background:#f7f7f7;border:1px solid #d2d2d2;box-sizing:border-box"></div>
<div style="left:772px;top:132px;width:158px;height:19px;background:#e6e6e6;border-bottom:1px solid #d2d2d2;box-sizing:border-box"></div>
<div class="t " style="left:781px;top:135px;font-size:12px;color:#333;font-weight:bold;">Lyfjaupplýsingar</div>
<div style="left:771px;top:475px;width:160px;height:200px;background:#f7f7f7;border:1px solid #d2d2d2;box-sizing:border-box"></div>
<div style="left:772px;top:476px;width:158px;height:19px;background:#e6e6e6;border-bottom:1px solid #d2d2d2;box-sizing:border-box"></div>
<div class="t " style="left:781px;top:479px;font-size:12px;color:#333;font-weight:bold;">Rofar</div>
<div style="left:771px;top:682px;width:160px;height:80px;background:#f7f7f7;border:1px solid #d2d2d2;box-sizing:border-box"></div>
<div style="left:772px;top:683px;width:158px;height:19px;background:#e6e6e6;border-bottom:1px solid #d2d2d2;box-sizing:border-box"></div>
<div class="t " style="left:781px;top:686px;font-size:12px;color:#333;font-weight:bold;">Bækur</div>
<div class="t " style="left:289px;top:170px;font-size:11px;color:#1a1a1a;">Vörunúmer:</div>
<div style="left:410px;top:166px;width:148px;height:19px;background:#f0f0f0;border:1px solid #a9a9a9;box-sizing:border-box;"></div>
<div class="t " style="left:413px;top:170px;font-size:11px;color:#000;letter-spacing:-0.3px">TGW-HS-A</div>
<div style="left:565px;top:165px;width:118px;height:25px;background:#f6f6f6;border:1px solid #d6d6d6;box-sizing:border-box"></div>
<div class="t" style="left:578px;top:173px;font-family:'Liberation Serif';font-weight:bold;font-size:11px;color:#555">F6</div>
<div class="t " style="left:598px;top:174px;font-size:10px;color:#6f6f6f;letter-spacing:0.1px">EAN Vörunúmer</div>
<div class="t " style="left:289px;top:201px;font-size:11px;color:#444;">Vörulýsing:</div>
<div style="left:410px;top:197px;width:248px;height:19px;background:#fff;border:1px solid #7a7a7a;box-sizing:border-box;"></div>
<div class="t " style="left:413px;top:201px;font-size:11px;color:#000;">Tæki</div>
<div class="t " style="left:289px;top:228px;font-size:11px;color:#444;">Vörulýsing 2:</div>
<div style="left:410px;top:224px;width:248px;height:19px;background:#fff;border:1px solid #a9a9a9;box-sizing:border-box;"></div>
<div class="t " style="left:289px;top:255px;font-size:11px;color:#444;">Leitarnúmer:</div>
<div style="left:410px;top:251px;width:148px;height:19px;background:#fff;border:1px solid #a9a9a9;box-sizing:border-box;"></div>
<div class="t " style="left:289px;top:282px;font-size:11px;color:#444;">Staðsetning á lager:</div>
<div style="left:410px;top:278px;width:248px;height:19px;background:#fff;border:1px solid #a9a9a9;box-sizing:border-box;"></div>
<div class="t " style="left:289px;top:358px;font-size:11px;color:#444;">Grunneining:</div>
<div style="left:410px;top:354px;width:78px;height:19px;background:#fff;border:1px solid #a9a9a9;box-sizing:border-box;"></div>
<div style="left:475px;top:363px;width:1px;height:1px;background:#3c3c3c"></div>
<div style="left:478px;top:363px;width:1px;height:1px;background:#3c3c3c"></div>
<div style="left:481px;top:363px;width:1px;height:1px;background:#3c3c3c"></div>
<div class="t " style="left:289px;top:385px;font-size:11px;color:#444;">Einingarmagn:</div>
<div style="left:410px;top:381px;width:78px;height:19px;background:#fff;border:1px solid #a9a9a9;box-sizing:border-box;"></div>
<div style="left:475px;top:389px;width:0;height:0;border-left:3px solid transparent;border-right:3px solid transparent;border-top:3px solid #707070"></div>
<div class="t" style="left:410px;top:385px;width:56px;text-align:right;font-size:11px;color:#000">1,00</div>
<div class="t " style="left:289px;top:412px;font-size:11px;color:#444;">Vöruflokkur:</div>
<div style="left:410px;top:408px;width:98px;height:19px;background:#fff;border:1px solid #a9a9a9;box-sizing:border-box;"></div>
<div style="left:495px;top:417px;width:1px;height:1px;background:#3c3c3c"></div>
<div style="left:498px;top:417px;width:1px;height:1px;background:#3c3c3c"></div>
<div style="left:501px;top:417px;width:1px;height:1px;background:#3c3c3c"></div>
<div class="t " style="left:413px;top:412px;font-size:11px;color:#000;">006</div>
<div style="left:287px;top:437px;width:221px;height:14px;background:#ffe600"></div>
<div class="t " style="left:289px;top:437px;font-size:11px;color:#222;">Aðstöðugjaldsprósenta:</div>
<div style="left:409px;top:434px;width:100px;height:19px;background:#fff;border:1px solid #a9a9a9;box-sizing:border-box;"></div>
<div style="left:410px;top:437px;width:98px;height:14px;background:#ffe600"></div>
<div style="left:496px;top:442px;width:0;height:0;border-left:3px solid transparent;border-right:3px solid transparent;border-top:3px solid #707070"></div>
<div class="t " style="left:289px;top:463px;font-size:11px;color:#444;">Aðstöðug.prós. dags:</div>
<div style="left:409px;top:458px;width:100px;height:20px;background:#fff;border:1px solid #a9a9a9;box-sizing:border-box;"></div>
<div style="left:496px;top:467px;width:0;height:0;border-left:3px solid transparent;border-right:3px solid transparent;border-top:3px solid #707070"></div>
<div class="t " style="left:289px;top:488px;font-size:11px;color:#444;">Bóka sölu á lækni:</div>
<div style="left:409px;top:484px;width:198px;height:19px;background:#fff;border:1px solid #a9a9a9;box-sizing:border-box;"></div>
<div style="left:594px;top:492px;width:0;height:0;border-left:3px solid transparent;border-right:3px solid transparent;border-top:3px solid #707070"></div>
<div class="t " style="left:289px;top:513px;font-size:11px;color:#444;">Læknir:</div>
<div style="left:409px;top:509px;width:198px;height:19px;background:#fff;border:1px solid #a9a9a9;box-sizing:border-box;"></div>
<div style="left:594px;top:518px;width:1px;height:1px;background:#3c3c3c"></div>
<div style="left:597px;top:518px;width:1px;height:1px;background:#3c3c3c"></div>
<div style="left:600px;top:518px;width:1px;height:1px;background:#3c3c3c"></div>
<div class="t " style="left:289px;top:541px;font-size:11px;color:#444;">Tegund vöru:</div>
<div style="left:410px;top:537px;width:98px;height:19px;background:#fff;border:1px solid #a9a9a9;box-sizing:border-box;"></div>
<div class="t " style="left:413px;top:542px;font-size:11px;color:#000;">Lagervara</div>
<div style="left:495px;top:545px;width:0;height:0;border-left:3px solid transparent;border-right:3px solid transparent;border-top:3px solid #707070"></div>
<div class="t " style="left:289px;top:567px;font-size:11px;color:#444;">UNSPSC flokkun:</div>
<div style="left:409px;top:563px;width:100px;height:19px;background:#fff;border:1px solid #a9a9a9;box-sizing:border-box;"></div>
<div style="left:495px;top:572px;width:1px;height:1px;background:#3c3c3c"></div>
<div style="left:498px;top:572px;width:1px;height:1px;background:#3c3c3c"></div>
<div style="left:501px;top:572px;width:1px;height:1px;background:#3c3c3c"></div>
<div class="t " style="left:289px;top:593px;font-size:11px;color:#444;">Afbrigði:</div>
<div style="left:410px;top:589px;width:98px;height:19px;background:#fff;border:1px solid #a9a9a9;box-sizing:border-box;"></div>
<div style="left:495px;top:598px;width:1px;height:1px;background:#3c3c3c"></div>
<div style="left:498px;top:598px;width:1px;height:1px;background:#3c3c3c"></div>
<div style="left:501px;top:598px;width:1px;height:1px;background:#3c3c3c"></div>
<div class="t " style="left:289px;top:620px;font-size:11px;color:#444;">Nettó þyngd (kg):</div>
<div style="left:410px;top:616px;width:78px;height:19px;background:#fff;border:1px solid #a9a9a9;box-sizing:border-box;"></div>
<div class="t" style="left:410px;top:620px;width:56px;text-align:right;font-size:11px;color:#222">0,00</div>
<div style="left:475px;top:624px;width:0;height:0;border-left:3px solid transparent;border-right:3px solid transparent;border-top:3px solid #707070"></div>
<div class="t " style="left:289px;top:647px;font-size:11px;color:#444;">Rúmmál (m3):</div>
<div style="left:410px;top:643px;width:78px;height:19px;background:#fff;border:1px solid #a9a9a9;box-sizing:border-box;"></div>
<div class="t" style="left:410px;top:647px;width:56px;text-align:right;font-size:11px;color:#222">0,00</div>
<div style="left:475px;top:651px;width:0;height:0;border-left:3px solid transparent;border-right:3px solid transparent;border-top:3px solid #707070"></div>
<div class="t " style="left:289px;top:674px;font-size:11px;color:#444;">Áfengisprósenta:</div>
<div style="left:410px;top:670px;width:78px;height:19px;background:#fff;border:1px solid #a9a9a9;box-sizing:border-box;"></div>
<div class="t" style="left:410px;top:674px;width:56px;text-align:right;font-size:11px;color:#222">0,00</div>
<div style="left:475px;top:678px;width:0;height:0;border-left:3px solid transparent;border-right:3px solid transparent;border-top:3px solid #707070"></div>
<div class="t " style="left:494px;top:674px;font-size:11px;color:#444;">Lítrar:</div>
<div style="left:530px;top:670px;width:78px;height:19px;background:#fff;border:1px solid #a9a9a9;box-sizing:border-box;"></div>
<div class="t" style="left:530px;top:674px;width:56px;text-align:right;font-size:11px;color:#222">0,00</div>
<div style="left:595px;top:678px;width:0;height:0;border-left:3px solid transparent;border-right:3px solid transparent;border-top:3px solid #707070"></div>
<div class="t " style="left:782px;top:170px;font-size:11px;color:#444;">Lyfjanúmer:</div>
<div style="left:885px;top:166px;width:30px;height:19px;background:#fff;border:1px solid #a9a9a9;box-sizing:border-box;"></div>
<div class="t " style="left:782px;top:197px;font-size:11px;color:#444;">Lyfjaheitisnúmer:</div>
<div style="left:885px;top:193px;width:30px;height:19px;background:#fff;border:1px solid #a9a9a9;box-sizing:border-box;"></div>
<div class="t " style="left:782px;top:224px;font-size:11px;color:#444;">Skráningardagur:</div>
<div style="left:885px;top:220px;width:30px;height:19px;background:#fff;border:1px solid #a9a9a9;box-sizing:border-box;"></div>
<div class="t " style="left:782px;top:251px;font-size:11px;color:#444;">Afskráningardagur:</div>
<div style="left:885px;top:247px;width:30px;height:19px;background:#fff;border:1px solid #a9a9a9;box-sizing:border-box;"></div>
<div class="t " style="left:782px;top:278px;font-size:11px;color:#444;">Pakkningamagn:</div>
<div style="left:885px;top:274px;width:30px;height:19px;background:#fff;border:1px solid #a9a9a9;box-sizing:border-box;"></div>
<div class="t " style="left:782px;top:305px;font-size:11px;color:#444;">Pakkningakódi:</div>
<div style="left:885px;top:301px;width:30px;height:19px;background:#fff;border:1px solid #a9a9a9;box-sizing:border-box;"></div>
<div class="t " style="left:782px;top:332px;font-size:11px;color:#444;">Lyfjaform:</div>
<div style="left:885px;top:328px;width:30px;height:19px;background:#fff;border:1px solid #a9a9a9;box-sizing:border-box;"></div>
<div class="t " style="left:782px;top:359px;font-size:11px;color:#444;">Styrksmagn:</div>
<div style="left:885px;top:355px;width:30px;height:19px;background:#fff;border:1px solid #a9a9a9;box-sizing:border-box;"></div>
<div class="t " style="left:782px;top:386px;font-size:11px;color:#444;">Styrkskódi:</div>
<div style="left:885px;top:382px;width:30px;height:19px;background:#fff;border:1px solid #a9a9a9;box-sizing:border-box;"></div>
<div class="t " style="left:782px;top:413px;font-size:11px;color:#444;">Eftirritunarskylt:</div>
<div style="left:884px;top:410px;width:16px;height:16px;background:#fff;border:1px solid #a9a9a9;box-sizing:border-box;"></div>
<div class="t " style="left:782px;top:439px;font-size:11px;color:#444;">Á lyfjalista:</div>
<div style="left:884px;top:436px;width:16px;height:16px;background:#fff;border:1px solid #a9a9a9;box-sizing:border-box;"></div>
<div class="t " style="left:782px;top:514px;font-size:11px;color:#444;">Óvirk vara:</div>
<div style="left:884px;top:511px;width:16px;height:16px;background:#fff;border:1px solid #a9a9a9;box-sizing:border-box;"></div>
<div class="t " style="left:782px;top:541px;font-size:11px;color:#444;">Ábyrgðartími (mán):</div>
<div style="left:885px;top:537px;width:30px;height:18px;background:#fff;border:1px solid #a9a9a9;box-sizing:border-box;"></div>
<div class="t " style="left:782px;top:567px;font-size:11px;color:#444;">Nota serialnúmer:</div>
<div style="left:884px;top:564px;width:16px;height:16px;background:#fff;border:1px solid #a9a9a9;box-sizing:border-box;"></div>
<div class="t " style="left:782px;top:593px;font-size:11px;color:#111;">Nota lotur:</div>
<div style="left:884px;top:590px;width:16px;height:16px;background:#f7f7f7;border:1px solid #e4e4e4;box-sizing:border-box;"></div>
<div class="t " style="left:782px;top:619px;font-size:11px;color:#444;">Spilliefni:</div>
<div style="left:884px;top:616px;width:16px;height:16px;background:#fff;border:1px solid #a9a9a9;box-sizing:border-box;"></div>
<div class="t " style="left:782px;top:645px;font-size:11px;color:#444;">UN flokkun:</div>
<div style="left:885px;top:641px;width:30px;height:19px;background:#fff;border:1px solid #a9a9a9;box-sizing:border-box;"></div>
<div class="t " style="left:782px;top:721px;font-size:11px;color:#444;">Isbn:</div>
<div style="left:885px;top:716px;width:30px;height:19px;background:#fff;border:1px solid #a9a9a9;box-sizing:border-box;"></div>
</body></html>
